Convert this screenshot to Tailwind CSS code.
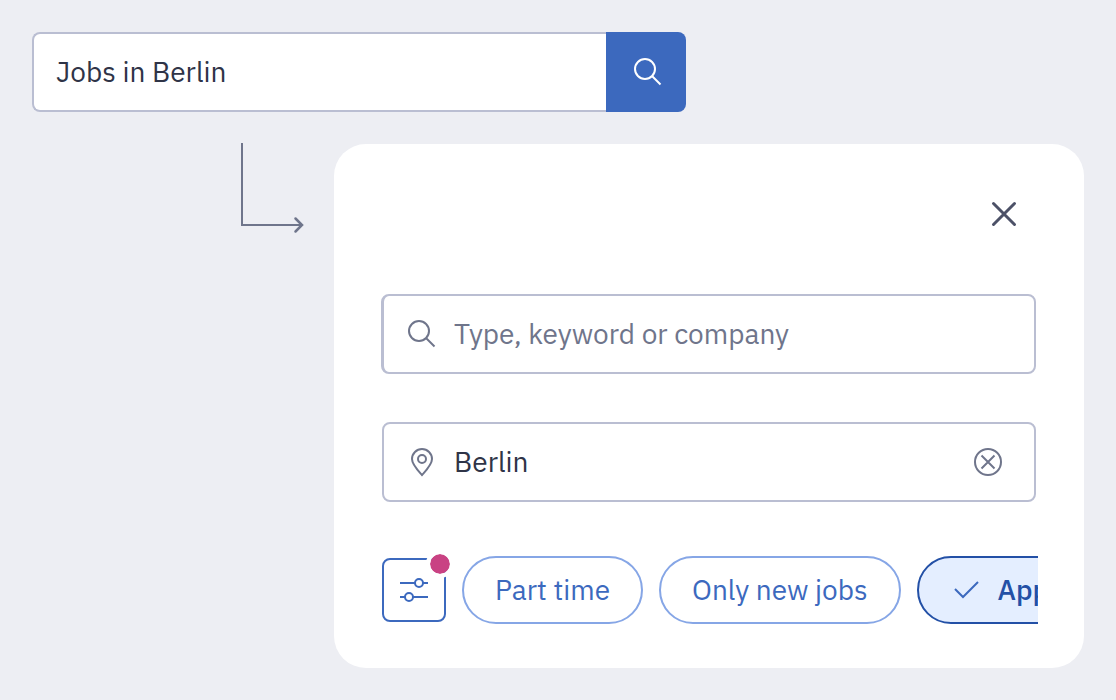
<!DOCTYPE html>
<html lang="en">
<head>
<meta charset="utf-8">
<meta name="viewport" content="width=device-width, initial-scale=1">
<title>Job search</title>
<script src="https://cdn.jsdelivr.net/npm/@tailwindcss/browser@4"></script>
</head>
<body class="min-h-screen bg-[#edeef3] font-['IBM_Plex_Sans','Roboto',sans-serif] text-[28px] leading-9 text-[#2f3447]">
<main class="flex flex-col gap-8 p-8">
  <form class="flex h-20 w-full max-w-[654px]">
    <input type="text" aria-label="Search jobs" value="Jobs in Berlin" class="min-w-0 flex-1 rounded-l-lg border-2 border-r-0 border-[#babed2] bg-white px-[22px] outline-none">
    <button type="button" aria-label="Search" class="flex w-20 items-center justify-center rounded-r-lg bg-[#3c69be] text-white">
      <svg class="size-8" viewBox="0 0 32 32" fill="none" stroke="currentColor" stroke-width="2"><circle cx="15" cy="13" r="10"/><path d="M22 20l8.500 8.500"/></svg>
    </button>
  </form>
  <div class="flex items-start">
    <div class="flex w-[302px] shrink-0 justify-end pr-[30px]">
      <svg class="-mt-px h-[92px] w-16 text-[#6f758b]" viewBox="0 0 64 92" fill="none" stroke="currentColor" stroke-width="2" aria-hidden="true"><path d="M2 0v82h60"/><path d="M55.500 75.500l6.500 6.500-6.500 6.500" stroke-linecap="round" stroke-width="2.500"/></svg>
    </div>
    <section aria-label="Search filters" class="min-w-0 flex-1 rounded-[32px] bg-white px-12 pt-[50px] pb-11">
      <div class="flex justify-end pr-3">
        <button type="button" aria-label="Close" class="flex size-10 items-center justify-center text-[#4c5167]">
          <svg class="size-8" viewBox="0 0 32 32" fill="none" stroke="currentColor" stroke-width="3"><path d="M5.500 5.500l21 21M26.500 5.500l-21 21" stroke-linecap="round"/></svg>
        </button>
      </div>
      <label class="mt-[60px] -ml-px flex h-20 items-center gap-4 rounded-lg border-2 border-l-3 border-[#babed2] px-[22px] text-[#6f758b]">
        <svg class="size-8 shrink-0" viewBox="0 0 32 32" fill="none" stroke="currentColor" stroke-width="2" aria-hidden="true"><circle cx="13" cy="13" r="10"/><path d="M20 20l8.500 8.500"/></svg>
        <input type="text" aria-label="Keyword" placeholder="Type, keyword or company" class="min-w-0 flex-1 text-[#2f3447] outline-none placeholder:text-[#6f758b]">
      </label>
      <div class="mt-12 flex h-20 items-center gap-4 rounded-lg border-2 border-[#babed2] pr-[30px] pl-[22px] text-[#6f758b]">
        <svg class="size-8 shrink-0" viewBox="0 0 32 32" fill="none" stroke="currentColor" stroke-width="2" aria-hidden="true"><path d="M16 29C12 24.500 6 18.500 6 13a10 10 0 0 1 20 0c0 5.500-6 11.500-10 16z"/><circle cx="16" cy="13" r="4"/></svg>
        <input type="text" aria-label="Location" value="Berlin" class="min-w-0 flex-1 text-[#2f3447] outline-none">
        <button type="button" aria-label="Clear location" class="shrink-0">
          <svg class="size-8" viewBox="0 0 32 32" fill="none" stroke="currentColor" stroke-width="2"><circle cx="16" cy="16" r="13"/><path d="M9.500 9.500l13 13M22.500 9.500l-13 13"/></svg>
        </button>
      </div>
      <div class="mt-[46px] -mr-0.5 flex items-center gap-4 overflow-hidden pt-2 text-[#3c69be]">
        <button type="button" aria-label="Filters" class="relative flex size-16 shrink-0 items-center justify-center rounded-lg border-2 border-[#3c69be]">
          <svg class="size-8" viewBox="0 0 32 32" fill="none" stroke="currentColor" stroke-width="2"><path d="M2 9h15M25 9h5M2 23h5M15 23h15"/><circle cx="21" cy="9" r="4"/><circle cx="11" cy="23" r="4"/></svg>
          <span class="absolute -top-[10px] -right-[10px] size-7 rounded-full border-4 border-white bg-[#c94283] bg-clip-padding"></span>
        </button>
        <button type="button" class="h-[68px] shrink-0 rounded-full border-2 border-[#86a6e6] px-[31px]">Part time</button>
        <button type="button" class="h-[68px] shrink-0 rounded-full border-2 border-[#86a6e6] px-[31px]">Only new jobs</button>
        <button type="button" aria-pressed="true" class="flex h-[68px] shrink-0 items-center gap-4 rounded-full border-2 border-[#2350a6] bg-[#e4eeff] px-[31px] font-medium text-[#2350a6]">
          <svg class="size-8 text-[#3c69be]" viewBox="0 0 32 32" fill="none" stroke="currentColor" stroke-width="2" aria-hidden="true"><path d="M5 15l8 8L28 8"/></svg>
          App
        </button>
      </div>
    </section>
  </div>
</main>
</body>
</html>
